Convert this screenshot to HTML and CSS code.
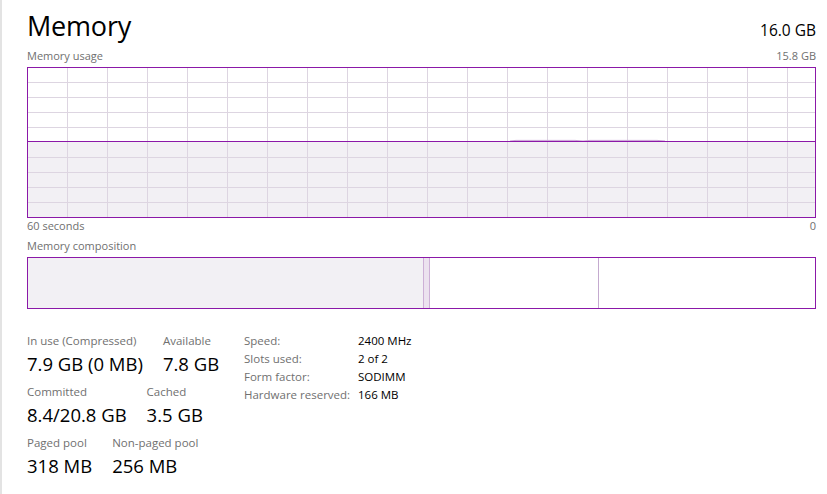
FILE: index.html
```html
<!DOCTYPE html>
<html lang="en">
<head>
    <meta charset="UTF-8" />
    <meta name="viewport" content="width=device-width, initial-scale=1.0" />
    <title>Memory</title>
    <link rel="stylesheet" href="styles.css">
</head>
<body>
    <div class="perf-page">
        <div class="perf-header">
            <h1>Memory</h1>
            <span class="perf-total">16.0 GB</span>
        </div>

        <div class="chart-caption">
            <span>Memory usage</span>
            <span>15.8 GB</span>
        </div>
        <div class="usage-chart">
            <svg width="789" height="151" viewBox="0 0 789 151">
                <!-- used area -->
                <rect x="0" y="74" width="789" height="77" fill="#f2f0f4" />
                <!-- grid -->
                <g stroke="#ddd5e1" stroke-width="1">
                    <line x1="40.5" y1="0" x2="40.5" y2="151" />
                    <line x1="80.5" y1="0" x2="80.5" y2="151" />
                    <line x1="120.5" y1="0" x2="120.5" y2="151" />
                    <line x1="160.5" y1="0" x2="160.5" y2="151" />
                    <line x1="200.5" y1="0" x2="200.5" y2="151" />
                    <line x1="240.5" y1="0" x2="240.5" y2="151" />
                    <line x1="280.5" y1="0" x2="280.5" y2="151" />
                    <line x1="320.5" y1="0" x2="320.5" y2="151" />
                    <line x1="360.5" y1="0" x2="360.5" y2="151" />
                    <line x1="400.5" y1="0" x2="400.5" y2="151" />
                    <line x1="440.5" y1="0" x2="440.5" y2="151" />
                    <line x1="480.5" y1="0" x2="480.5" y2="151" />
                    <line x1="520.5" y1="0" x2="520.5" y2="151" />
                    <line x1="560.5" y1="0" x2="560.5" y2="151" />
                    <line x1="600.5" y1="0" x2="600.5" y2="151" />
                    <line x1="640.5" y1="0" x2="640.5" y2="151" />
                    <line x1="680.5" y1="0" x2="680.5" y2="151" />
                    <line x1="720.5" y1="0" x2="720.5" y2="151" />
                    <line x1="760.5" y1="0" x2="760.5" y2="151" />
                    <line x1="0" y1="15.5" x2="789" y2="15.5" />
                    <line x1="0" y1="30.5" x2="789" y2="30.5" />
                    <line x1="0" y1="45.5" x2="789" y2="45.5" />
                    <line x1="0" y1="60.5" x2="789" y2="60.5" />
                    <line x1="0" y1="90.5" x2="789" y2="90.5" />
                    <line x1="0" y1="105.5" x2="789" y2="105.5" />
                    <line x1="0" y1="120.5" x2="789" y2="120.5" />
                    <line x1="0" y1="135.5" x2="789" y2="135.5" />
                </g>
                <!-- usage line -->
                <polyline points="483,74 489,73.4 548,73.4 556,74 563,73.4 630,73.4 638,74" fill="none" stroke="#c9a3d4" stroke-width="1" />
                <line x1="0" y1="74.5" x2="789" y2="74.5" stroke="#8b18a8" stroke-width="1" />
                <rect x="0.5" y="0.5" width="788" height="150" fill="none" stroke="#8b18a8" stroke-width="1" />
            </svg>
        </div>
        <div class="chart-axis">
            <span>60 seconds</span>
            <span>0</span>
        </div>

        <div class="section-caption">Memory composition</div>
        <div class="composition">
            <div class="seg seg-inuse" style="width: 395px"></div>
            <div class="seg seg-modified" style="width: 5px"></div>
            <div class="seg seg-standby" style="width: 168px"></div>
            <div class="seg seg-free"></div>
        </div>

        <div class="stats">
            <div class="stats-main">
                <div class="stat-row">
                    <div class="stat">
                        <div class="stat-label">In use (Compressed)</div>
                        <div class="stat-value">7.9 GB (0 MB)</div>
                    </div>
                    <div class="stat">
                        <div class="stat-label">Available</div>
                        <div class="stat-value">7.8 GB</div>
                    </div>
                </div>
                <div class="stat-row">
                    <div class="stat">
                        <div class="stat-label">Committed</div>
                        <div class="stat-value">8.4/20.8 GB</div>
                    </div>
                    <div class="stat">
                        <div class="stat-label">Cached</div>
                        <div class="stat-value">3.5 GB</div>
                    </div>
                </div>
                <div class="stat-row">
                    <div class="stat">
                        <div class="stat-label">Paged pool</div>
                        <div class="stat-value">318 MB</div>
                    </div>
                    <div class="stat">
                        <div class="stat-label">Non-paged pool</div>
                        <div class="stat-value">256 MB</div>
                    </div>
                </div>
            </div>

            <div class="stats-info">
                <span class="info-label">Speed:</span>
                <span class="info-value">2400 MHz</span>
                <span class="info-label">Slots used:</span>
                <span class="info-value">2 of 2</span>
                <span class="info-label">Form factor:</span>
                <span class="info-value">SODIMM</span>
                <span class="info-label">Hardware reserved:</span>
                <span class="info-value">166 MB</span>
            </div>
        </div>
    </div>
</body>
</html>
```

FILE: styles.css
```css
body {
    font-family: "Segoe UI", "Open Sans", sans-serif;
    margin: 0;
    background-color: #fff;
    color: #000;
}

.perf-page {
    box-sizing: border-box;
    width: 827px;
    height: 494px;
    border-left: 2px solid #e3e3e3;
    padding: 0 11px 0 25px;
}

.perf-header {
    display: flex;
    justify-content: space-between;
    align-items: baseline;
    padding-top: 9px;
}

.perf-header h1 {
    margin: 0;
    font-size: 27px;
    font-weight: normal;
    line-height: 34px;
    letter-spacing: -0.2px;
}

.perf-total {
    font-size: 15.5px;
}

.chart-caption,
.chart-axis {
    display: flex;
    justify-content: space-between;
    font-size: 11px;
    line-height: 16px;
    color: #707070;
}

.chart-caption {
    margin-top: 5px;
    margin-bottom: 3px;
}

.usage-chart svg {
    display: block;
}

.section-caption {
    margin-top: 4px;
    font-size: 11px;
    line-height: 16px;
    color: #707070;
}

.composition {
    display: flex;
    height: 50px;
    margin-top: 3px;
    border: 1px solid #8b18a8;
}

.seg {
    height: 100%;
}

.seg-inuse {
    background-color: #f2f0f4;
    border-right: 1px solid #cdb0d6;
}

.seg-modified {
    background-color: #ece2ef;
    border-right: 1px solid #cdb0d6;
}

.seg-standby {
    background-color: #fff;
    border-right: 1px solid #c4aacf;
}

.seg-free {
    flex: 1;
    background-color: #fff;
}

.stats {
    display: flex;
    align-items: flex-start;
    margin-top: 23px;
}

.stats-main {
    width: 217px;
}

.stat-row {
    display: flex;
    gap: 20px;
    margin-bottom: 5px;
}

.stat-label {
    font-size: 11.5px;
    line-height: 18px;
    color: #707070;
    white-space: nowrap;
}

.stat-value {
    font-size: 18.5px;
    line-height: 28px;
    white-space: nowrap;
}

.stats-info {
    display: grid;
    grid-template-columns: 114px auto;
    align-content: start;
    font-size: 11.5px;
    line-height: 18px;
}

.info-label {
    color: #707070;
}

.info-value {
    color: #000;
}
```
